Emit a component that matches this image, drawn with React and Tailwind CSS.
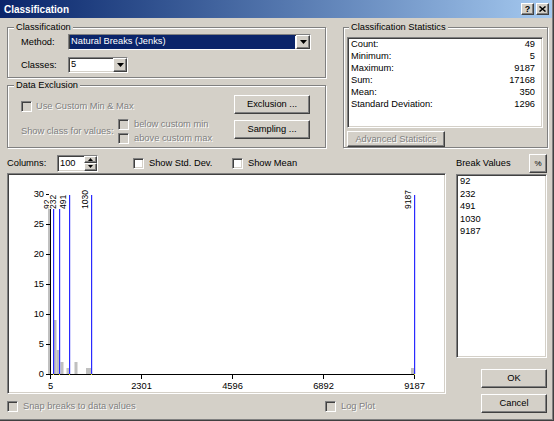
import React from 'react';

const sunken = 'border border-t-[#808080] border-l-[#808080] border-r-white border-b-white shadow-[inset_1px_1px_0_#404040,inset_-1px_-1px_0_#d4d0c8]';
const raised = 'border border-t-white border-l-white border-r-[#404040] border-b-[#404040] shadow-[inset_-1px_-1px_0_#808080]';
const etched = 'border border-[#808080] shadow-[inset_1px_1px_0_#fff,1px_1px_0_#fff]';
const grayText = 'text-[#808080] [text-shadow:1px_1px_0_#fff]';

const Check = ({ disabled }) => (
  <span className={`block h-[11px] w-[11px] shrink-0 ${sunken} ${disabled ? 'bg-[#d4d0c8]' : 'bg-white'}`} />
);

const Arrow = () => (
  <svg width="7" height="4" viewBox="0 0 7 4">
    <path d="M0 0h7L3.5 4z" fill="#000" />
  </svg>
);

const Combo = ({ width, highlighted, children }) => (
  <div className={`flex h-[16px] ${width} bg-white ${sunken}`}>
    <div className="flex-1 px-[1px]">
      <div className={`h-full pl-[1px] leading-[13px] ${highlighted ? 'bg-[#0a246a] text-white' : ''}`}>
        {children}
      </div>
    </div>
    <div className={`flex w-[14px] items-center justify-center bg-[#d4d0c8] ${raised}`}>
      <Arrow />
    </div>
  </div>
);

const PushButton = ({ className = '', disabled, children }) => (
  <div className={`flex items-center justify-center bg-[#d4d0c8] ${raised} ${className} ${disabled ? grayText : ''}`}>
    {children}
  </div>
);

const Histogram = () => {
  const xOf = (v) => 51 + ((v - 5) * 364) / 9182;
  const yOf = (c) => 375 - c * 6;
  const bars = [
    [49, 52, 28], [54, 57.5, 9], [57.5, 60.5, 4], [61.5, 64.5, 2],
    [67.5, 70.5, 1], [75.5, 78.5, 2], [87, 93, 1], [412, 415, 1],
  ];
  const breaks = [92, 232, 491, 1030, 9187];
  const yTicks = [0, 5, 10, 15, 20, 25, 30];
  const xTicks = [[5, 51], [2301, 142], [4596, 233], [6892, 324], [9187, 415]];

  return (
    <svg width="435" height="217" className="block">
      <g transform="translate(-9 -175)" fontFamily="Liberation Sans, Arial, sans-serif">
        {bars.map(([x1, x2, c], i) => (
          <rect key={i} x={x1} y={yOf(c)} width={x2 - x1} height={c * 6} fill="#c0c0c0" />
        ))}
        <rect x="51" y="195" width="1" height="181" fill="#000" />
        <rect x="51" y="375" width="365" height="1" fill="#000" />
        {yTicks.map((v) => (
          <rect key={v} x="47" y={yOf(v)} width="4" height="1" fill="#000" />
        ))}
        {xTicks.map(([, x]) => (
          <rect key={x} x={x} y="375" width="1" height="5" fill="#000" />
        ))}
        {breaks.map((b) => (
          <rect key={b} x={Math.round(xOf(b))} y="196" width="1.2" height="179" fill="#2a2aff" />
        ))}
        {breaks.map((b) => (
          <rect key={b} x={Math.round(xOf(b))} y="375" width="1" height="1" fill="#e8e800" />
        ))}
        {breaks.map((b) => {
          const bx = Math.round(xOf(b)) - 3;
          const len = String(b).length * 4.8 + 1;
          return (
            <g key={b}>
              <rect x={bx - 7} y={210 - len} width="8" height={len} fill="#fff" />
              <text x={bx} y="210" fontSize="8.5" fill="#000" transform={`rotate(-90 ${bx} 210)`}>
                {b}
              </text>
            </g>
          );
        })}
        {yTicks.map((v) => (
          <text key={v} x="45" y={yOf(v) + 3.4} fontSize="9.3" fill="#000" textAnchor="end">
            {v}
          </text>
        ))}
        {xTicks.map(([label, x]) => (
          <text key={x} x={x + 0.5} y="390" fontSize="9.3" fill="#000" textAnchor="middle">
            {label}
          </text>
        ))}
      </g>
    </svg>
  );
};

export default function App() {
  const stats = [
    ['Count:', '49'],
    ['Minimum:', '5'],
    ['Maximum:', '9187'],
    ['Sum:', '17168'],
    ['Mean:', '350'],
    ['Standard Deviation:', '1296'],
  ];
  const breakValues = ['92', '232', '491', '1030', '9187'];

  return (
    <div className="h-[421px] w-[554px] overflow-hidden border-r border-b border-[#404040] bg-[#d4d0c8] font-['Liberation_Sans',Arial,sans-serif] text-[9.3px] leading-[11px] text-black shadow-[inset_-1px_-1px_0_#808080]">
      {/* title bar */}
      <div className="mr-[1px] flex h-[18px] items-center justify-between bg-linear-to-r from-[#0a246a] to-[#a6caf0] pl-[4px] pr-[3px]">
        <span className="text-[10px] font-bold text-white">Classification</span>
        <div className="flex gap-[2px]">
          <div className={`flex h-[12px] w-[13px] items-center justify-center bg-[#d4d0c8] text-[9px] font-bold leading-none ${raised}`}>?</div>
          <div className={`flex h-[12px] w-[13px] items-center justify-center bg-[#d4d0c8] ${raised}`}>
            <svg width="7" height="6" viewBox="0 0 7 6">
              <path d="M0.5 0.5l6 5M6.5 0.5l-6 5" stroke="#000" strokeWidth="1.5" />
            </svg>
          </div>
        </div>
      </div>

      {/* top section */}
      <div className="flex pl-[7px] pt-[4px]">
        <div className="flex w-[319px] flex-col">
          <fieldset className={`h-[56px] ${etched}`}>
            <legend className="ml-[6px] bg-[#d4d0c8] px-[2px] leading-[11px]">Classification</legend>
            <div className="pl-[13px] pt-[1px]">
              <div className="flex h-[16px] items-center">
                <span className="w-[47px]">Method:</span>
                <Combo width="w-[243px]" highlighted>Natural Breaks (Jenks)</Combo>
              </div>
              <div className="mt-[7px] flex h-[16px] items-center">
                <span className="w-[47px]">Classes:</span>
                <Combo width="w-[60px]">5</Combo>
              </div>
            </div>
          </fieldset>

          <fieldset className={`mt-[2px] h-[68px] ${etched}`}>
            <legend className="ml-[6px] bg-[#d4d0c8] px-[2px] leading-[11px]">Data Exclusion</legend>
            <div className="flex pl-[13px]">
              <div className="flex flex-1 flex-col">
                <div className={`mt-[10px] flex h-[11px] items-center gap-[4px] ${grayText}`}>
                  <Check disabled />
                  <span>Use Custom Min &amp; Max</span>
                </div>
                <div className={`mt-[7px] flex items-center ${grayText}`}>
                  <span className="w-[97px]">Show class for values:</span>
                  <div className="flex flex-col gap-[3px]">
                    <div className="flex h-[11px] items-center gap-[5px]">
                      <Check disabled />
                      <span>below custom min</span>
                    </div>
                    <div className="flex h-[11px] items-center gap-[5px]">
                      <Check disabled />
                      <span>above custom max</span>
                    </div>
                  </div>
                </div>
              </div>
              <div className="mr-[15px] mt-[4px] flex w-[76px] flex-col gap-[6px]">
                <PushButton className="h-[19px]">Exclusion ...</PushButton>
                <PushButton className="h-[19px]">Sampling ...</PushButton>
              </div>
            </div>
          </fieldset>
        </div>

        <fieldset className={`ml-[17px] h-[126px] w-[205px] ${etched}`}>
          <legend className="ml-[5px] bg-[#d4d0c8] px-[2px] leading-[11px]">Classification Statistics</legend>
          <div className={`ml-[3px] mt-[4px] h-[91px] w-[196px] bg-white pl-[3px] pr-[7px] ${sunken}`}>
            {stats.map(([k, v]) => (
              <div key={k} className="flex justify-between leading-[12px]">
                <span>{k}</span>
                <span>{v}</span>
              </div>
            ))}
          </div>
          <PushButton disabled className="ml-[3px] mt-[3px] h-[16px] w-[98px]">Advanced Statistics</PushButton>
        </fieldset>
      </div>

      {/* histogram section */}
      <div className="flex pl-[7px]">
        <div className="flex w-[439px] flex-col">
          <div className="mt-[5px] flex h-[20px] items-center">
            <span className="w-[50px]">Columns:</span>
            <div className={`flex h-[17px] w-[41px] bg-white ${sunken}`}>
              <span className="flex-1 pl-[2px] leading-[14px]">100</span>
              <div className="flex w-[13px] flex-col">
                <div className={`flex flex-1 items-center justify-center bg-[#d4d0c8] ${raised}`}>
                  <svg width="5" height="3" viewBox="0 0 5 3"><path d="M2.5 0L5 3H0z" fill="#000" /></svg>
                </div>
                <div className={`flex flex-1 items-center justify-center bg-[#d4d0c8] ${raised}`}>
                  <svg width="5" height="3" viewBox="0 0 5 3"><path d="M0 0h5L2.5 3z" fill="#000" /></svg>
                </div>
              </div>
            </div>
            <div className="ml-[35px] flex w-[99px] items-center gap-[5px]">
              <Check />
              <span>Show Std. Dev.</span>
            </div>
            <div className="flex items-center gap-[5px]">
              <Check />
              <span>Show Mean</span>
            </div>
          </div>

          <div className={`h-[221px] bg-white ${sunken}`}>
            <Histogram />
          </div>

          <div className={`mt-[7px] flex h-[11px] items-center ${grayText}`}>
            <div className="flex w-[318px] items-center gap-[5px]">
              <Check disabled />
              <span>Snap breaks to data values</span>
            </div>
            <div className="flex items-center gap-[5px]">
              <Check disabled />
              <span>Log Plot</span>
            </div>
          </div>
        </div>

        <div className="ml-[10px] flex w-[91px] flex-col">
          <div className="mt-[6px] flex h-[19px] items-center justify-between">
            <span>Break Values</span>
            <PushButton className="h-[19px] w-[18px] text-[8px]">%</PushButton>
          </div>
          <div className={`mt-[1px] h-[184px] bg-white pl-[3px] leading-[12.5px] ${sunken}`}>
            {breakValues.map((b) => (
              <div key={b}>{b}</div>
            ))}
          </div>
          <PushButton className="ml-[25px] mt-[11px] h-[19px] w-[66px]">OK</PushButton>
          <PushButton className="ml-[25px] mt-[6px] h-[19px] w-[66px]">Cancel</PushButton>
        </div>
      </div>
    </div>
  );
}
